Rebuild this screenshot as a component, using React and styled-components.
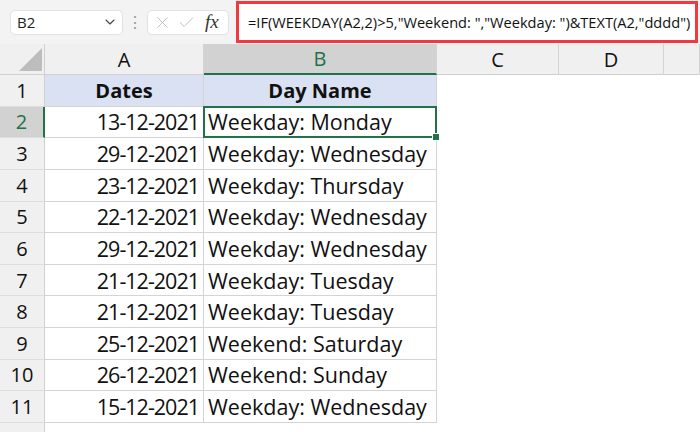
import React from "react";
import styled, { createGlobalStyle, css } from "styled-components";
import { ChevronDown, X, Check } from "lucide-react";

const GlobalStyle = createGlobalStyle`
  body {
    margin: 0;
    background: #ffffff;
    font-family: "Open Sans", "Noto Sans", sans-serif;
  }
`;

const rows = [
  ["13-12-2021", "Weekday: Monday"],
  ["29-12-2021", "Weekday: Wednesday"],
  ["23-12-2021", "Weekday: Thursday"],
  ["22-12-2021", "Weekday: Wednesday"],
  ["29-12-2021", "Weekday: Wednesday"],
  ["21-12-2021", "Weekday: Tuesday"],
  ["21-12-2021", "Weekday: Tuesday"],
  ["25-12-2021", "Weekend: Saturday"],
  ["26-12-2021", "Weekend: Sunday"],
  ["15-12-2021", "Weekday: Wednesday"],
];

const columns = ["A", "B", "C", "D", ""];

export default function App() {
  return (
    <Page>
      <GlobalStyle />
      <FormulaBar>
        <NameBox>
          <span>B2</span>
          <ChevronDown size={16} strokeWidth={1.6} color="#444" />
        </NameBox>
        <Grip>⋮</Grip>
        <IconBox>
          <X size={19} strokeWidth={1.1} color="#b8b8b8" />
          <Check size={19} strokeWidth={1.1} color="#b8b8b8" />
          <Fx>fx</Fx>
        </IconBox>
        <FormulaInput>
          =IF(WEEKDAY(A2,2)&gt;5,"Weekend: ","Weekday: ")&amp;TEXT(A2,"dddd")
        </FormulaInput>
      </FormulaBar>
      <Sheet>
        <Corner>
          <Triangle />
        </Corner>
        {columns.map((c, i) => (
          <ColHead key={i} $active={c === "B"}>
            {c}
          </ColHead>
        ))}

        <RowHead>1</RowHead>
        <Cell $table $head $align="center">Dates</Cell>
        <Cell $table $head $align="center">Day Name</Cell>
        <Cell />
        <Cell />
        <Cell />

        {rows.map(([d, name], i) => (
          <React.Fragment key={i}>
            <RowHead $active={i === 0}>{i + 2}</RowHead>
            <Cell $table $align="right" $tight>{d}</Cell>
            <Cell $table $selected={i === 0}>{name}</Cell>
            <Cell />
            <Cell />
            <Cell />
          </React.Fragment>
        ))}

        <RowHead />
        <Cell />
        <Cell />
        <Cell />
        <Cell />
        <Cell />
      </Sheet>
    </Page>
  );
}

const Page = styled.div`
  width: 700px;
  height: 432px;
  overflow: hidden;
  background: #fff;
`;

const FormulaBar = styled.div`
  height: 44px;
  background: #f3f3f3;
  display: flex;
  align-items: center;
  padding: 0 2px 0 10px;
  box-sizing: border-box;
`;

const NameBox = styled.div`
  flex: 0 0 113px;
  height: 25px;
  box-sizing: border-box;
  background: #fff;
  border: 1px solid #e2e2e2;
  border-radius: 5px;
  display: flex;
  align-items: center;
  justify-content: space-between;
  padding: 0 4px 0 6px;
  font-size: 15px;
  color: #222;
`;

const Grip = styled.div`
  flex: 0 0 24px;
  text-align: center;
  color: #9a9a9a;
  font-size: 16px;
`;

const IconBox = styled.div`
  flex: 0 0 82px;
  height: 25px;
  box-sizing: border-box;
  background: #fff;
  border: 1px solid #e2e2e2;
  border-radius: 5px;
  display: flex;
  align-items: center;
  gap: 5px;
  padding: 0 4px 0 5px;
`;

const Fx = styled.span`
  font-family: "Liberation Serif", serif;
  font-style: italic;
  font-size: 19px;
  color: #333;
  margin-left: 4px;
`;

const FormulaInput = styled.div`
  flex: 1;
  min-width: 0;
  overflow: hidden;
  margin-left: 7px;
  height: 42px;
  box-sizing: border-box;
  border: 3px solid #f2393e;
  background: #fff;
  display: flex;
  align-items: center;
  padding-left: 9px;
  font-size: 14.6px;
  color: #111;
  white-space: nowrap;
`;

const Sheet = styled.div`
  display: grid;
  grid-template-columns: 45px 159px 233px 122px 105px 1fr;
  grid-template-rows: 31px repeat(11, 31.64px) 20px;
  font-size: 20px;
  color: #111;
`;

const Corner = styled.div`
  background: #f0f0f0;
  border-right: 1px solid #d0d0d0;
  border-bottom: 1px solid #d0d0d0;
  display: flex;
  align-items: flex-end;
  justify-content: flex-end;
  padding: 0 2px 3px 0;
`;

const Triangle = styled.div`
  width: 0;
  height: 0;
  border-left: 23px solid transparent;
  border-bottom: 23px solid #bdbdbd;
`;

const ColHead = styled.div`
  background: ${(p) => (p.$active ? "#d2d2d2" : "#f0f0f0")};
  color: ${(p) => (p.$active ? "#217346" : "#111")};
  border-right: 1px solid #d4d4d4;
  border-bottom: ${(p) => (p.$active ? "2px solid #217346" : "1px solid #d0d0d0")};
  display: flex;
  align-items: center;
  justify-content: center;
  font-size: 20px;
`;

const RowHead = styled.div`
  background: ${(p) => (p.$active ? "#d2d2d2" : "#f0f0f0")};
  color: ${(p) => (p.$active ? "#217346" : "#111")};
  border-right: ${(p) => (p.$active ? "2px solid #217346" : "1px solid #d0d0d0")};
  border-bottom: 1px solid #dedede;
  display: flex;
  align-items: center;
  justify-content: center;
  font-size: 20px;
`;

const Cell = styled.div`
  position: relative;
  display: flex;
  align-items: center;
  padding: 0 4px;
  white-space: nowrap;
  font-size: 21.5px;
  letter-spacing: ${(p) => (p.$tight ? "-1px" : "0")};
  justify-content: ${(p) =>
    p.$align === "right" ? "flex-end" : p.$align === "center" ? "center" : "flex-start"};
  ${(p) =>
    p.$table &&
    css`
      border-right: 1px solid #d4d4d4;
      border-bottom: 1px solid #d4d4d4;
    `}
  ${(p) =>
    p.$head &&
    css`
      background: #d9e1f2;
      font-weight: 700;
      font-size: 20px;
    `}
  ${(p) =>
    p.$selected &&
    css`
      &::after {
        content: "";
        position: absolute;
        inset: -1px -1px -1px -1px;
        border: 2px solid #217346;
      }
      &::before {
        content: "";
        position: absolute;
        right: -4px;
        bottom: -4px;
        width: 6px;
        height: 6px;
        background: #217346;
        border: 1px solid #fff;
        z-index: 2;
      }
    `}
`;
